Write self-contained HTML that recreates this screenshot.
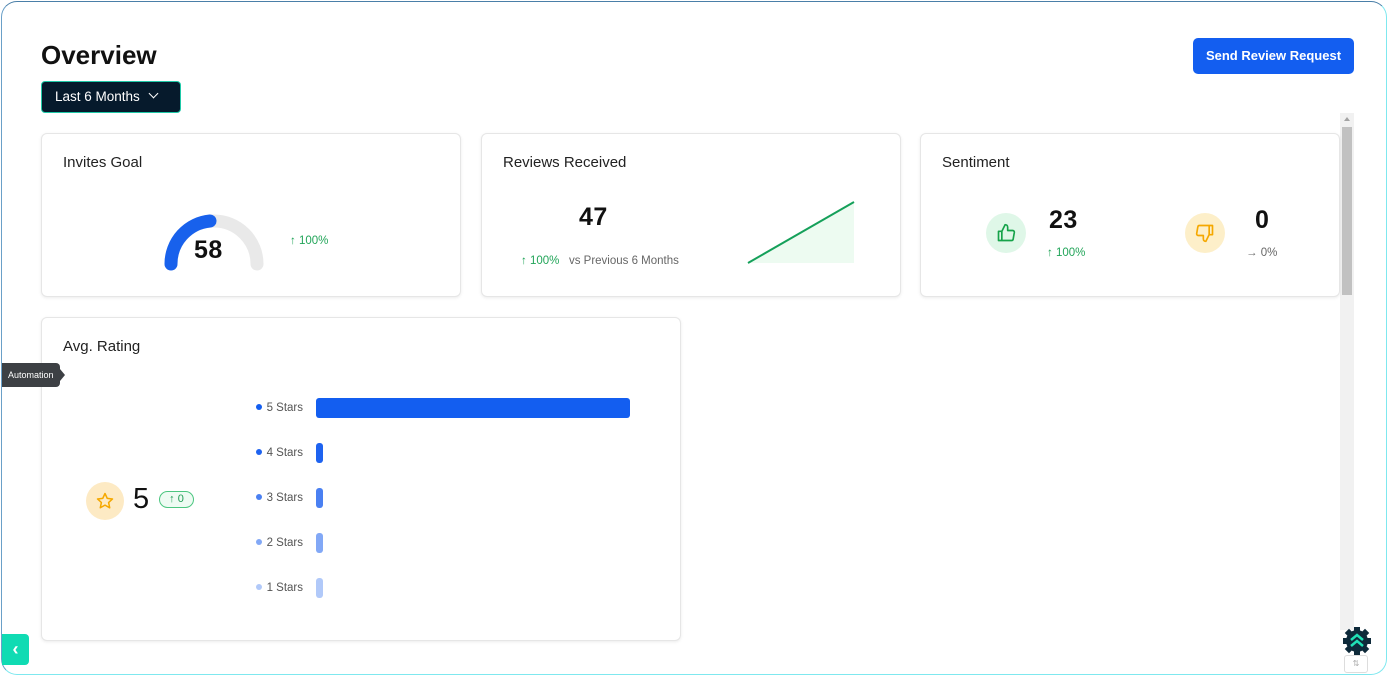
<!DOCTYPE html>
<html><head><meta charset="utf-8"><style>
*{box-sizing:border-box;margin:0;padding:0}
body{width:1388px;height:676px;background:#fff;font-family:"Liberation Sans",sans-serif;position:relative;overflow:hidden;color:#111}
.frame{position:absolute;left:1px;top:1px;width:1386px;height:674px;border:1.5px solid #7fe8ef;border-top-color:#4a7fa8;border-left-color:#6aa0c8;border-radius:16px}
.card{position:absolute;background:#fff;border:1px solid #e6e6e6;border-radius:6px;box-shadow:0 1px 3px rgba(0,0,0,.08)}
.t{position:absolute;font-size:15px;color:#222}
.abs{position:absolute}
.g{color:#22a559;font-size:11.5px}
.big{font-size:25px;font-weight:900;letter-spacing:.5px}
.lbl{position:absolute;font-size:11.5px;color:#555;text-align:right;width:60px}
.dot{display:inline-block;width:6px;height:6px;border-radius:50%;margin-right:5px;vertical-align:1px}
.bar{position:absolute;left:316px;width:7px;height:20px;border-radius:3px}
</style></head><body>
<div class="frame"></div>
<div class="abs" style="left:41px;top:40px;font-size:26px;font-weight:bold;color:#111">Overview</div>
<div class="abs" style="left:41px;top:81px;width:140px;height:32px;background:#061a2c;border:1.5px solid #1fc9a8;border-radius:4px;color:#fff;font-size:13.5px;line-height:29px;padding-left:13px">Last 6 Months <span style="display:inline-block;margin-left:6px;width:7px;height:7px;border-right:1.5px solid #fff;border-bottom:1.5px solid #fff;transform:rotate(45deg);vertical-align:4px"></span></div>
<div class="abs" style="left:1193px;top:38px;width:161px;height:36px;background:#135ef0;border-radius:5px;color:#fff;font-size:13px;font-weight:bold;line-height:36px;text-align:center">Send Review Request</div>
<div class="abs" style="left:1340px;top:113px;width:14px;height:517px;background:#f1f1f1"></div>
<div class="abs" style="left:1342px;top:127px;width:10px;height:168px;background:#c1c1c1"></div>
<div class="abs" style="left:1344px;top:117px;width:0;height:0;border-left:3px solid transparent;border-right:3px solid transparent;border-bottom:4px solid #a3a3a3"></div>

<div class="card" style="left:41px;top:133px;width:420px;height:164px">
 <div class="t" style="left:21px;top:20px">Invites Goal</div>
 <svg class="abs" style="left:120px;top:72px" width="104" height="66" viewBox="0 0 104 66"><path d="M9 58 A43 43 0 0 1 95 58" fill="none" stroke="#e9e9e9" stroke-width="13" stroke-linecap="round"/><path d="M9 58 A43 43 0 0 1 48 15" fill="none" stroke="#1861ec" stroke-width="13" stroke-linecap="round"/></svg>
 <div class="abs big" style="left:152px;top:102px">58</div>
 <div class="abs g" style="left:248px;top:101px">↑ 100%</div>
</div>
<div class="card" style="left:481px;top:133px;width:420px;height:164px">
 <div class="t" style="left:21px;top:20px">Reviews Received</div>
 <div class="abs big" style="left:97px;top:69px">47</div>
 <div class="abs" style="left:39px;top:121px;font-size:11.5px"><span class="g">↑ 100%</span>&nbsp;&nbsp; <span style="color:#666">vs Previous 6 Months</span></div>
 <svg class="abs" style="left:265px;top:67px" width="110" height="64"><path d="M1 62 L107 1 L107 62Z" fill="#edfbf1"/><path d="M1 62 L107 1" stroke="#15a05a" stroke-width="2"/></svg>
</div>
<div class="card" style="left:920px;top:133px;width:420px;height:164px">
 <div class="t" style="left:21px;top:20px">Sentiment</div>
 <div class="abs" style="left:65px;top:79px;width:40px;height:40px;border-radius:50%;background:#dff7e8;display:flex;align-items:center;justify-content:center">
  <svg width="20" height="20" viewBox="0 0 24 24" fill="none" stroke="#16a34a" stroke-width="2" stroke-linejoin="round"><path d="M7 10v11H3V10z M7 10l4-8c1.5 0 3 1 3 3v4h6a2 2 0 0 1 2 2.3l-1.4 8A2 2 0 0 1 18.6 21H7"/></svg></div>
 <div class="abs big" style="left:128px;top:72px">23</div>
 <div class="abs g" style="left:126px;top:113px">↑ 100%</div>
 <div class="abs" style="left:264px;top:79px;width:40px;height:40px;border-radius:50%;background:#fdefc9;display:flex;align-items:center;justify-content:center">
  <svg width="20" height="20" viewBox="0 0 24 24" fill="none" stroke="#f5a800" stroke-width="2" stroke-linejoin="round"><path d="M17 14V3h4v11z M17 14l-4 8c-1.5 0-3-1-3-3v-4H4a2 2 0 0 1-2-2.3l1.4-8A2 2 0 0 1 5.4 3H17"/></svg></div>
 <div class="abs big" style="left:334px;top:72px">0</div>
 <div class="abs" style="left:325px;top:113px;font-size:11.5px;color:#666">→ 0%</div>
</div>
<div class="card" style="left:41px;top:317px;width:640px;height:324px">
 <div class="t" style="left:21px;top:20px">Avg. Rating</div>
 <div class="abs" style="left:44px;top:164px;width:38px;height:38px;border-radius:50%;background:#fdeac4;display:flex;align-items:center;justify-content:center">
  <svg width="18" height="18" viewBox="0 0 24 24" fill="none" stroke="#f5a800" stroke-width="2" stroke-linejoin="round"><path d="M12 2l3 6.5 7 .8-5.2 4.8 1.5 7L12 17.5 5.7 21l1.5-7L2 9.3l7-.8z"/></svg></div>
 <div class="abs" style="left:91px;top:165px;font-size:29px;color:#111">5</div>
 <div class="abs" style="left:117px;top:173px;width:35px;height:17px;border:1px solid #4cc680;border-radius:9px;background:#eefbf3;color:#1f9d55;font-size:11px;line-height:15px;text-align:center">↑ 0</div>
</div>
<div class="lbl" style="left:243px;top:402px"><span class="dot" style="background:#135ef0"></span>5 Stars</div>
<div class="lbl" style="left:243px;top:447px"><span class="dot" style="background:#1e63f0"></span>4 Stars</div>
<div class="lbl" style="left:243px;top:492px"><span class="dot" style="background:#4a80f2"></span>3 Stars</div>
<div class="lbl" style="left:243px;top:537px"><span class="dot" style="background:#82a8f6"></span>2 Stars</div>
<div class="lbl" style="left:243px;top:582px"><span class="dot" style="background:#b1c9f9"></span>1 Stars</div>
<div class="bar" style="top:398px;width:314px;background:#135ef0"></div>
<div class="bar" style="top:443px;background:#1e63f0"></div>
<div class="bar" style="top:488px;background:#4a80f2"></div>
<div class="bar" style="top:533px;background:#82a8f6"></div>
<div class="bar" style="top:578px;background:#b1c9f9"></div>

<div class="abs" style="left:2px;top:363px;width:58px;height:24px;background:#3d4044;border-radius:0 4px 4px 0;color:#fff;font-size:9px;line-height:24px;padding-left:6px">Automation</div>
<div class="abs" style="left:60px;top:369px;width:0;height:0;border-top:6px solid transparent;border-bottom:6px solid transparent;border-left:5px solid #3d4044"></div>
<div class="abs" style="left:2px;top:634px;width:27px;height:31px;background:#10dbb3;border-radius:0 4px 4px 0;color:#fff;font-size:18px;font-weight:bold;line-height:30px;text-align:center">‹</div>
<div class="abs" style="left:1344px;top:655px;width:24px;height:18px;border:1px solid #ddd;border-radius:3px;font-size:8px;color:#aaa;text-align:center;line-height:16px">⇅</div>
<svg class="abs" style="left:1342px;top:626px" width="30" height="30" viewBox="0 0 30 30"><circle cx="15" cy="15" r="11" fill="#0e2a3a"/><g fill="#0e2a3a"><rect x="12" y="1" width="6" height="6"/><rect x="12" y="23" width="6" height="6"/><rect x="1" y="12" width="6" height="6"/><rect x="23" y="12" width="6" height="6"/><rect x="4" y="4" width="6" height="6" transform="rotate(45 7 7)"/><rect x="20" y="4" width="6" height="6" transform="rotate(45 23 7)"/><rect x="4" y="20" width="6" height="6" transform="rotate(45 7 23)"/><rect x="20" y="20" width="6" height="6" transform="rotate(45 23 23)"/></g><path d="M9 14l6-5 6 5M9 20l6-5 6 5" fill="none" stroke="#20e0b5" stroke-width="2.5"/></svg>
</body></html>
